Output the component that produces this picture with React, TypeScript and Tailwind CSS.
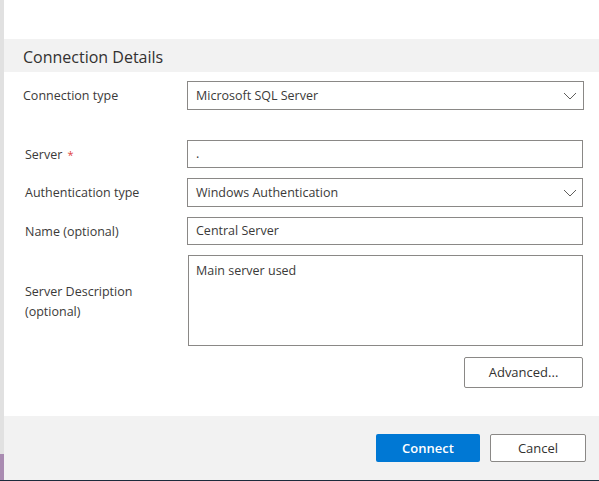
import React from "react";

function Chevron() {
  return (
    <svg width="14" height="8" viewBox="0 0 14 8" className="shrink-0">
      <path d="M1 1 L7 7 L13 1" fill="none" stroke="#605e5c" strokeWidth="1" />
    </svg>
  );
}

function Label({ children, pl = "pl-0" }: { children: React.ReactNode; pl?: string }) {
  return <div className={`w-[164px] shrink-0 text-[12.5px] text-[#3b3a39] pt-[2px] ${pl}`}>{children}</div>;
}

export default function App() {
  return (
    <div
      className="w-[599px] h-[481px] flex flex-col overflow-hidden bg-white"
      style={{ fontFamily: '"Open Sans", "Noto Sans", sans-serif' }}
    >
      <div className="flex flex-1 min-h-0">
        <div className="w-[4px] flex flex-col shrink-0">
          <div className="flex-1 bg-[#e1e1e1]" />
          <div className="h-[26px] bg-[#a98bb1]" />
        </div>
        <div className="flex-1 flex flex-col">
          <div className="h-[39px] bg-white" />
          <div className="h-[33px] bg-[#f2f2f2] flex items-center pl-[19px] pt-[2px]">
            <span className="text-[16px] text-[#323130]">Connection Details</span>
          </div>
          <div className="flex-1 flex flex-col pl-[19px] pr-[15px]">
            <div className="flex items-center mt-[9px]">
              <Label>Connection type</Label>
              <div className="flex-1 h-[29px] border border-[#8a8886] flex items-center justify-between pl-[8px] pr-[6px] pt-[1px] text-[12.5px] text-[#3b3a39]">
                <span>Microsoft SQL Server</span>
                <Chevron />
              </div>
            </div>
            <div className="flex items-center mt-[30px]">
              <Label pl="pl-[2px]">
                Server <span className="text-[#e0443e] text-[11px] ml-[2px]">*</span>
              </Label>
              <div className="flex-1 h-[28px] border border-[#8a8886] flex items-center pl-[8px] pt-[1px] text-[12.5px] text-[#3b3a39] mr-[1px]">
                <span>.</span>
              </div>
            </div>
            <div className="flex items-center mt-[10px]">
              <Label pl="pl-[2px]">Authentication type</Label>
              <div className="flex-1 h-[29px] border border-[#8a8886] flex items-center justify-between pl-[8px] pr-[5px] pt-[1px] text-[12.5px] text-[#3b3a39] mr-[1px]">
                <span>Windows Authentication</span>
                <Chevron />
              </div>
            </div>
            <div className="flex items-center mt-[10px]">
              <Label pl="pl-[2px]">Name (optional)</Label>
              <div className="flex-1 h-[28px] border border-[#8a8886] flex items-center pl-[8px] pt-[1px] text-[12.5px] text-[#3b3a39] mr-[1px]">
                <span>Central Server</span>
              </div>
            </div>
            <div className="flex items-center mt-[10px]">
              <Label pl="pl-[2px]">
                <div className="leading-[20px]">
                  Server Description
                  <br />
                  (optional)
                </div>
              </Label>
              <div className="flex-1 h-[91px] border border-[#8a8886] pl-[7px] pt-[6px] text-[12.5px] text-[#3b3a39] mr-[1px] ml-[1px]">
                Main server used
              </div>
            </div>
            <div className="flex justify-end mt-[11px] mr-[1px]">
              <button className="w-[119px] h-[31px] border border-[#8a8886] rounded-[2px] bg-white text-[13px] text-[#323130] pt-[1px]">
                Advanced...
              </button>
            </div>
          </div>
          <div className="h-[64px] bg-[#f2f2f2] flex items-start justify-end pt-[18px] pr-[13px] gap-[10px]">
            <button className="w-[104px] h-[28px] rounded-[2px] bg-[#0078d4] text-white text-[13px] font-semibold pt-[1px]">
              Connect
            </button>
            <button className="w-[96px] h-[28px] rounded-[2px] border border-[#8a8886] bg-white text-[13px] text-[#323130] pt-[1px]">
              Cancel
            </button>
          </div>
        </div>
      </div>
      <div className="h-[1px] bg-[#1c2b3c] shrink-0" />
    </div>
  );
}
